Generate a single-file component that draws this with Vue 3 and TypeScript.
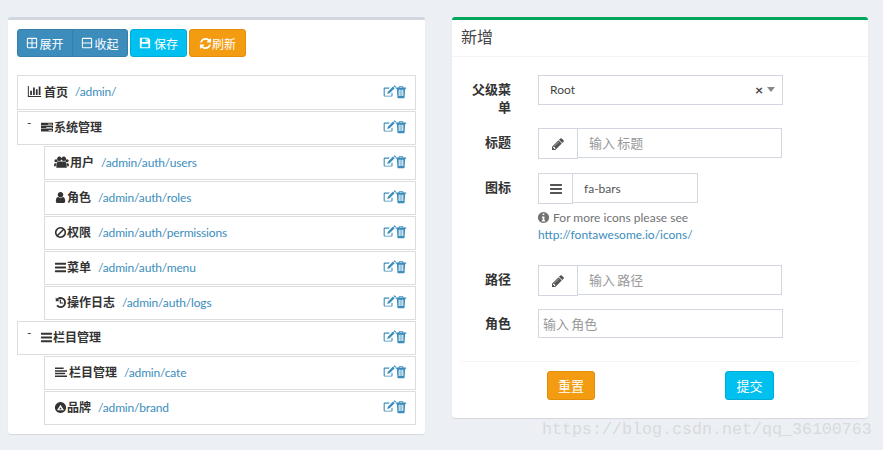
<script setup lang="ts">
const P: Record<string, string> = {
  bars: 'M1664 1344v128q0 26-19 45t-45 19h-1408q-26 0-45-19t-19-45v-128q0-26 19-45t45-19h1408q26 0 45 19t19 45zm0-512v128q0 26-19 45t-45 19h-1408q-26 0-45-19t-19-45v-128q0-26 19-45t45-19h1408q26 0 45 19t19 45zm0-512v128q0 26-19 45t-45 19h-1408q-26 0-45-19t-19-45v-128q0-26 19-45t45-19h1408q26 0 45 19t19 45z',
  user: 'M1536 1399q0 109-62.500 187t-150.500 78h-854q-88 0-150.500-78t-62.500-187q0-85 8.500-160.500t31.500-152 58.500-131 94-89 134.500-34.500q131 128 313 128t313-128q76 0 134.500 34.500t94 89 58.500 131 31.500 152 8.500 160.500zm-256-887q0 159-112.500 271.500t-271.500 112.500-271.500-112.500-112.500-271.500 112.500-271.500 271.500-112.500 271.500 112.500 112.500 271.500z',
  pencil: 'M491 1536l91-91-235-235-91 91v107h128v128h107zm523-928q0-22-22-22-10 0-17 7l-542 542q-7 7-7 17 0 22 22 22 10 0 17-7l542-542q7-7 7-17zm-54-192l416 416-832 832h-416v-416zm683 96q0 53-37 90l-166 166-416-416 166-165q36-38 90-38 53 0 91 38l235 234q37 39 37 91z',
  chart: 'M100 1550V230h120v1200h1470v120H100zM380 1300V800h210v500H380zm340 0V420h210v880H720zm340 0V640h210v660h-210zm340 0V300h210v1000h-210z',
  tasks: 'M128 340h1536v360H128zM128 760h1536v340H128zM128 1160h1536v320H128zM1000 470h520v90h-520zM800 890h720v90H800zM1100 1280h420v90h-420z',
  users: 'M640 720a270 270 0 1 1 .1 0zM1170 720a270 270 0 1 1 .1 0zM240 880a190 190 0 1 1 .1 0zM1560 880a190 190 0 1 1 .1 0zM480 780h840q200 80 200 520v230H280v-230q0-440 200-520zM0 1260q0-310 170-310 70 100 110 100-70 120-70 300H0zM1792 1260q0-310-170-310-70 100-110 100 70 120 70 300h210z',
  ban: 'M896 128a768 768 0 1 0 .1 0zm0 224c112 0 215 34 300 92L444 1196A544 544 0 0 1 896 352zm0 1088c-112 0-215-34-300-92l752-752a544 544 0 0 1-452 844z',
  history: 'M896 140a756 756 0 0 1 0 1512c-225 0-430-100-570-260l190-170c90 110 225 180 380 180a500 500 0 0 0 0-1000c-130 0-250 50-340 130l190 190H240V220l160 160C530 230 705 140 896 140zM800 500h170v380h300v170H800z',
  align: 'M128 320h1100v190H128zM128 660h1536v190H128zM128 1000h1300v190H128zM128 1340h1536v190H128z',
  brand: 'M896 128a768 768 0 1 0 .1 0zM896 520l480 760H416zm0 340l-170 270h340z',
  edit: 'M1000 330H330q-120 0-120 120v900q0 120 120 120h900q120 0 120-120v-360h-140v340q0 40-40 40H390q-40 0-40-40V510q0-40 40-40h470zM1400 200l220 220-650 650-300 80 80-300zM1480 130l90-80q40-30 80 0l130 130q30 40 0 80l-80 90z',
  trash: 'M640 160h512l70 160h340v150h-130l-80 1120q-5 90-100 90H540q-95 0-100-90L360 470H230V320h340zM700 320h392l-30-60H730zM600 600v800h130V600zM830 600v800h130V600zM1060 600v800h130V600z',
  info: 'M896 128a768 768 0 1 0 .1 0zM780 340h230v220H780zM700 760h320v500h100v200H670v-200h110V960h-80z',
  refresh: 'M1639 1056q0 5-1 7-64 268-268 434.500t-478 166.500q-146 0-282.500-55t-243.500-157l-129 129q-19 19-45 19t-45-19-19-45v-448q0-26 19-45t45-19h448q26 0 45 19t19 45-19 45l-137 137q71 66 161 102t187 36q134 0 250-65t186-179q11-17 53-117 8-23 30-23h192q13 0 22.500 9.500t9.500 22.500zm25-800v448q0 26-19 45t-45 19h-448q-26 0-45-19t-19-45 19-45l138-138q-148-137-349-137-134 0-250 65t-186 179q-11 17-53 117-8 23-30 23h-199q-13 0-22.500-9.500t-9.500-22.500v-7q65-268 270-434.500t480-166.500q146 0 284 55.500t245 156.500l130-129q19-19 45-19t45 19 19 45z',
  save: 'M128 128h1250l286 286v1250H128zM448 256v480h800V256zM1000 320h150v340h-150zM384 1024v512h1024v-512z',
  plus: 'M320 128h1152q192 0 192 192v1152q0 192-192 192H320q-192 0-192-192V320q0-192 192-192zM320 280q-40 0-40 40v500h540V280zM972 280v540h540V320q0-40-40-40zM280 972v500q0 40 40 40h500V972zM972 972v540h500q40 0 40-40V972z',
  minus: 'M320 128h1152q192 0 192 192v1152q0 192-192 192H320q-192 0-192-192V320q0-192 192-192zM320 280q-40 0-40 40v500h1232V320q0-40-40-40zM280 972v500q0 40 40 40h1152q40 0 40-40V972z'
}
type Row = { icon: string; title: string; uri?: string; child?: boolean; toggle?: boolean }
const rows: Row[] = [
  { icon: 'chart', title: '首页', uri: '/admin/' },
  { icon: 'tasks', title: '系统管理', toggle: true },
  { icon: 'users', title: '用户', uri: '/admin/auth/users', child: true },
  { icon: 'user', title: '角色', uri: '/admin/auth/roles', child: true },
  { icon: 'ban', title: '权限', uri: '/admin/auth/permissions', child: true },
  { icon: 'bars', title: '菜单', uri: '/admin/auth/menu', child: true },
  { icon: 'history', title: '操作日志', uri: '/admin/auth/logs', child: true },
  { icon: 'bars', title: '栏目管理', toggle: true },
  { icon: 'align', title: '栏目管理', uri: '/admin/cate', child: true },
  { icon: 'brand', title: '品牌', uri: '/admin/brand', child: true }
]
</script>

<template>
  <div class="page">
    <section class="box left">
      <div class="toolbar">
        <div class="group">
          <button class="btn primary"><svg class="ic" viewBox="0 0 1792 1792"><path :d="P.plus" fill-rule="evenodd" /></svg>展开</button>
          <button class="btn primary"><svg class="ic" viewBox="0 0 1792 1792"><path :d="P.minus" fill-rule="evenodd" /></svg>收起</button>
        </div>
        <button class="btn info"><svg class="ic sv" viewBox="0 0 1792 1792"><path :d="P.save" fill-rule="evenodd" /></svg>保存</button>
        <button class="btn warning"><svg class="ic rf" viewBox="0 0 1792 1792"><path :d="P.refresh" /></svg>刷新</button>
      </div>
      <ul class="tree">
        <li v-for="r in rows" :key="r.title + r.icon" class="row" :class="{ child: r.child }">
          <span v-if="r.toggle" class="toggle">-</span>
          <svg class="ric" :class="'i-' + r.icon" viewBox="0 0 1792 1792"><path :d="P[r.icon]" fill-rule="evenodd" /></svg>
          <strong class="name">{{ r.title }}</strong>
          <a v-if="r.uri" class="uri">{{ r.uri }}</a>
          <span class="actions">
            <svg viewBox="0 0 1792 1792"><path :d="P.edit" fill-rule="evenodd" /></svg>
            <svg class="tr" viewBox="0 0 1792 1792"><path :d="P.trash" fill-rule="evenodd" /></svg>
          </span>
        </li>
      </ul>
    </section>

    <section class="box right">
      <header class="head">新增</header>
      <form class="form">
        <div class="line l1">
          <label>父级菜单</label>
          <div class="select">
            <span class="val">Root</span>
            <span class="clear">×</span>
            <span class="caret"></span>
          </div>
        </div>
        <div class="line l2">
          <label>标题</label>
          <div class="ig">
            <span class="addon"><svg viewBox="0 0 1792 1792"><path :d="P.pencil" fill-rule="evenodd" /></svg></span>
            <input class="inp" placeholder="输入 标题" />
          </div>
        </div>
        <div class="line l3">
          <label>图标</label>
          <div class="iconf">
            <div class="ig small">
              <span class="addon"><svg viewBox="0 0 1792 1792"><path :d="P.bars" /></svg></span>
              <input class="inp" value="fa-bars" />
            </div>
            <p class="help"><svg viewBox="0 0 1792 1792"><path :d="P.info" fill-rule="evenodd" /></svg> For more icons please see<br /><a>http://fontawesome.io/icons/</a></p>
          </div>
        </div>
        <div class="line l4">
          <label>路径</label>
          <div class="ig">
            <span class="addon"><svg viewBox="0 0 1792 1792"><path :d="P.pencil" fill-rule="evenodd" /></svg></span>
            <input class="inp" placeholder="输入 路径" />
          </div>
        </div>
        <div class="line l5">
          <label>角色</label>
          <input class="plain" placeholder="输入 角色" />
        </div>
      </form>
      <footer class="foot">
        <button class="btn warning reset">重置</button>
        <button class="btn info submit">提交</button>
      </footer>
    </section>
    <div class="mark">https://blog.csdn.net/qq_36100763</div>
  </div>
</template>

<style>
body { background: #ecf0f5; }
</style>

<style scoped>
.page {
  position: relative;
  width: 883px;
  height: 450px;
  overflow: hidden;
  background: #ecf0f5;
  display: flex;
  align-items: flex-start;
  padding: 17px 0 0 8px;
  gap: 27px;
  box-sizing: border-box;
  font-family: "Lato", "Noto Sans CJK SC", sans-serif;
  font-size: 13px;
  color: #333;
}
.box {
  background: #fff;
  border-top: 3px solid #d2d6de;
  border-radius: 3px;
  box-shadow: 0 1px 1px rgba(0, 0, 0, .1);
  box-sizing: border-box;
}
.left { width: 417px; height: 417px; padding: 9px 9px 0; }
.right { width: 416px; height: 401px; border-top-color: #00a65a; }

.toolbar { display: flex; gap: 2px; }
.group { display: flex; }
.btn {
  height: 28px;
  box-sizing: border-box;
  border: 1px solid transparent;
  border-radius: 3px;
  color: #fff;
  font: 13px "Lato", "Noto Sans CJK SC", sans-serif;
  padding: 0;
  display: flex;
  align-items: center;
  justify-content: center;
}
.toolbar .btn { font-size: 12px; }
.primary { background: #3c8dbc; border-color: #367fa9; width: 56px; }
.group .primary:first-child { border-radius: 3px 0 0 3px; }
.group .primary:last-child { border-radius: 0 3px 3px 0; margin-left: -1px; }
.info { background: #00c0ef; border-color: #00acd6; width: 57px; }
.warning { background: #f39c12; border-color: #e08e0b; width: 57px; }
.ic { width: 12px; height: 12px; fill: #fff; flex: none; margin-right: 1px; }
.ic.sv { margin-right: 3px; }
.ic.rf { width: 13px; height: 13px; margin-right: 0; }

.tree { list-style: none; margin: 18px 0 0; padding: 0; }
.row {
  height: 34px;
  margin-bottom: 1px;
  box-sizing: border-box;
  border: 1px solid #ddd;
  display: flex;
  align-items: center;
  padding: 0 9px 2px;
  width: 399px;
}
.row:first-child { height: 35px; }
.row.child { margin-left: 27px; width: 372px; }
.toggle { width: 13px; font-size: 12px; color: #333; line-height: 1; margin-top: -8px; flex: none; }
.ric { width: 13px; height: 13px; fill: #333; flex: none; }
.i-chart { width: 15px; height: 15px; margin-right: 2px; }
.i-tasks { width: 14px; height: 14px; }
.i-users { width: 15px; height: 15px; margin-right: 1px; }
.i-align { width: 14px; height: 14px; margin-right: 1px; }
.name { font-weight: 600; color: #333; font-size: 12px; margin-top: -1px; }
.uri { margin-left: 7px; color: #3c8dbc; font-size: 12px; letter-spacing: -.17px; }
.actions { margin-left: auto; display: flex; margin-right: -2px; }
.actions svg { width: 14px; height: 14px; fill: #3c8dbc; flex: none; }
.actions .tr { margin-left: -2px; }

.head {
  height: 37px;
  box-sizing: border-box;
  border-bottom: 1px solid #f4f4f4;
  padding: 6px 9px 0;
  font-size: 16px;
  color: #444;
  line-height: 22px;
}
.form { height: 304px; box-sizing: border-box; padding-top: 18px; display: flex; flex-direction: column; }
.line { display: flex; align-items: flex-start; }
.line label {
  width: 44px;
  margin-left: 15px;
  margin-right: 27px;
  text-align: right;
  font-weight: 700;
  font-size: 13px;
  line-height: 18px;
  padding-top: 5px;
  flex: none;
  color: #333;
}
.l2 { margin-top: 12px; }
.l3 { margin-top: 14px; }
.l4 { margin-top: 22px; }
.l5 { margin-top: 13px; }
.select {
  width: 245px;
  height: 30px;
  border: 1px solid #d2d6de;
  box-sizing: border-box;
  display: flex;
  align-items: center;
  padding: 0 7px 2px 11px;
  color: #444;
  font-size: 12px;
}
.clear { margin-left: auto; font-weight: 700; font-size: 14px; color: #444; }
.caret {
  margin-left: 4px;
  border: 4px solid transparent;
  border-top: 5px solid #888;
  border-bottom: 0;
}
.ig { display: flex; width: 244px; height: 31px; }
.ig.small { width: 160px; height: 30px; }
.addon {
  width: 40px;
  flex: none;
  box-sizing: border-box;
  border: 1px solid #d2d6de;
  display: flex;
  align-items: center;
  justify-content: center;
  height: 31px;
}
.small .addon { width: 35px; }
.addon svg { width: 14px; height: 14px; fill: #555; }
.inp, .plain {
  box-sizing: border-box;
  border: 1px solid #d2d6de;
  outline: none;
  font: 13px "Lato", "Noto Sans CJK SC", sans-serif;
  word-spacing: -1px;
  color: #555;
  background: #fff;
}
.inp { border-left: 0; flex: 1; min-width: 0; padding: 0 11px; height: 30px; }
.small .inp { border-left: 1px solid #d2d6de; margin-left: -1px; padding: 0 11px; font-size: 12px; }
.plain { width: 245px; height: 29px; padding: 0 4px; }
.inp::placeholder, .plain::placeholder { color: #999; opacity: 1; }
.help { margin: 6px 0 0; color: #737373; font-size: 12px; line-height: 17px; }
.help svg { width: 13px; height: 13px; fill: #737373; vertical-align: -2px; margin-left: -1px; }
.help a { color: #3c8dbc; }
.foot {
  margin: 0 9px;
  border-top: 1px solid #f4f4f4;
  padding-top: 9px;
  display: flex;
}
.reset { width: 48px; height: 29px; margin-left: 86px; }
.submit { width: 49px; height: 29px; margin-left: 130px; }
.mark {
  position: absolute;
  left: 542px;
  top: 421px;
  font: 16.67px/18px "Liberation Mono", monospace;
  color: #d8dadc;
}
</style>
